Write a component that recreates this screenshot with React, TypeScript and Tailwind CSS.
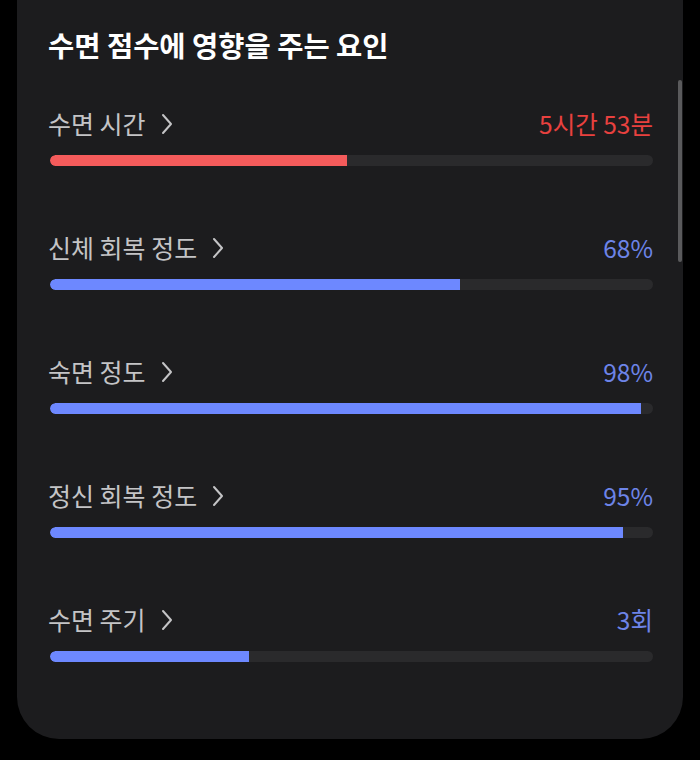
const rows = [
  { label: '수면 시간', value: '5시간 53분', pct: 49.3, red: true },
  { label: '신체 회복 정도', value: '68%', pct: 68 },
  { label: '숙면 정도', value: '98%', pct: 98 },
  { label: '정신 회복 정도', value: '95%', pct: 95 },
  { label: '수면 주기', value: '3회', pct: 33 },
];

function Chevron() {
  return (
    <svg width="12" height="22" viewBox="0 0 12 22" className="ml-[15px]">
      <polyline points="2,2 10,11 2,20" fill="none" stroke="#c4c4c6" strokeWidth="2" strokeLinecap="round" strokeLinejoin="round" />
    </svg>
  );
}

export default function App() {
  return (
    <div
      className="bg-black w-[700px] h-[760px] px-[17px]"
      style={{ fontFamily: '"Noto Sans CJK KR", "Noto Sans", sans-serif' }}
    >
      <div className="relative bg-[#1c1c1e] h-[739px] rounded-b-[42px] pl-[32px] pr-[30px] pt-[27px]">
        <h2 className="text-[28.5px] leading-[36px] font-bold text-white -ml-[1px]">
          수면 점수에 영향을 주는 요인
        </h2>
        <div className="mt-[43px] flex flex-col gap-[64px]">
          {rows.map((r) => (
            <div key={r.label}>
              <div className="flex items-center justify-between h-[36px]">
                <div className="flex items-center text-[25px] text-[#c4c4c6] -ml-[1px]">
                  <span>{r.label}</span>
                  <Chevron />
                </div>
                <span className={`text-[24.5px] ${r.red ? 'text-[#e8413f]' : 'text-[#6d84e8]'}`}>
                  {r.value}
                </span>
              </div>
              <div className="mt-[13px] ml-[1px] h-[11px] rounded-full bg-[#2a2a2c] overflow-hidden">
                <div
                  className={`h-full rounded-l-full ${r.red ? 'bg-[#f45b5b]' : 'bg-[#6d88ff]'}`}
                  style={{ width: `${r.pct}%` }}
                />
              </div>
            </div>
          ))}
        </div>
        <div className="absolute right-[1px] top-[80px] w-[4px] h-[182px] rounded-full bg-[#5a5a5c]" />
      </div>
    </div>
  );
}
